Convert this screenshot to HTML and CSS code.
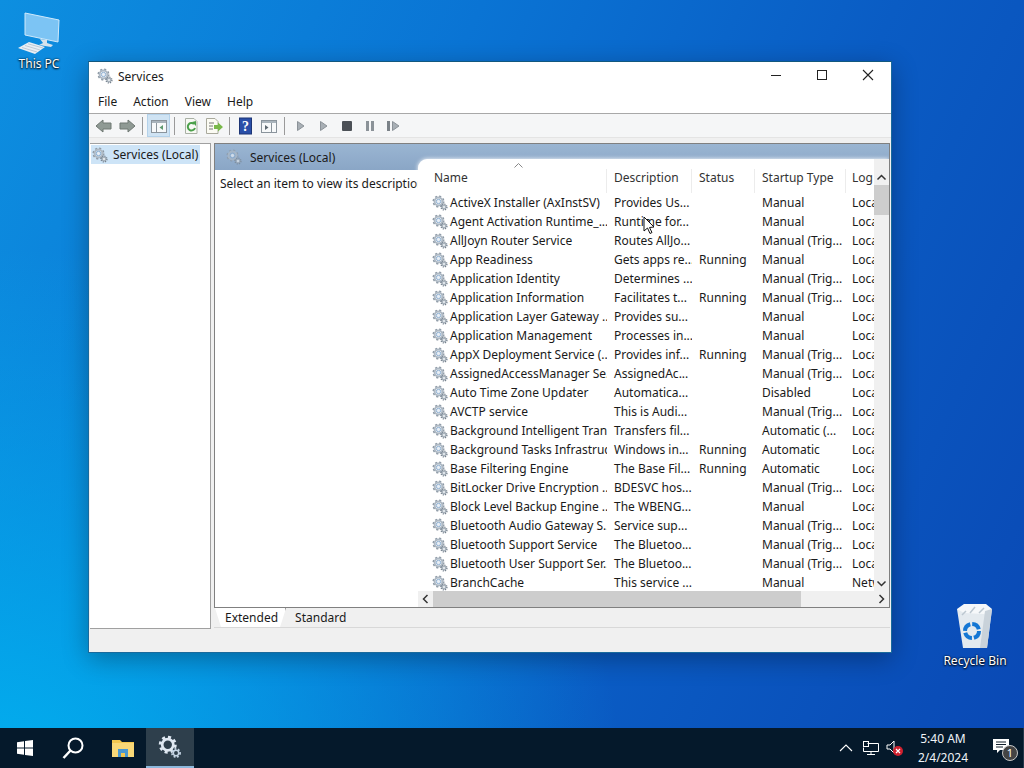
FILE: index.html
```html
<!DOCTYPE html>
<html lang="en">
<head>
  <meta charset="UTF-8" />
  <title>Services</title>
  <link rel="stylesheet" href="styles.css">
</head>
<body>

  <!-- shared icons -->
  <svg class="defs" width="0" height="0">
    <symbol id="gear" viewBox="0 0 16 16">
      <circle cx="6.5" cy="6.5" r="5" fill="none" stroke="#8b97a3" stroke-width="2" stroke-dasharray="2 1.93"/>
      <circle cx="6.5" cy="6.5" r="3.9" fill="none" stroke="#aeb9c4" stroke-width="2"/>
      <circle cx="6.5" cy="6.5" r="2.2" fill="#e8eef5" stroke="#77a0c8" stroke-width="0.8"/>
      <circle cx="12" cy="12" r="2.9" fill="none" stroke="#77838f" stroke-width="1.4" stroke-dasharray="1.2 1.08"/>
      <circle cx="12" cy="12" r="2" fill="#dfe5ea" stroke="#8d99a5" stroke-width="1"/>
    </symbol>
  </svg>

  <div class="desktop">

    <!-- Desktop icons -->
    <div class="desk-icon pc-icon">
      <svg width="48" height="44" viewBox="0 0 48 44">
        <polygon points="12,1 60,1" fill="none"/>
        <polygon points="10,2 44,9 43,31 10,24" fill="#7cc4f4" stroke="#cfe9fb" stroke-width="1"/>
        <polygon points="25,28 32,29 32,32 38,34 36,36 24,34 28,32" fill="#d5e2ec"/>
        <polygon points="3,37 14,31 30,36 20,43" fill="#e8eef4"/>
        <path d="M7 36.500L22 41M10 34.500L25 39M13 32.800L28 37" stroke="#a9bac8" stroke-width="0.7"/>
      </svg>
      <span>This PC</span>
    </div>

    <div class="desk-icon bin-icon">
      <svg width="42" height="46" viewBox="0 0 42 46">
        <polygon points="3,6 38,6 33,45 9,45" fill="#e4eaef"/>
        <polygon points="3,6 10,1 32,1 38,6 30,11 10,10" fill="#f6f8fa"/>
        <path d="M8 12L12 8M16 10L21 4M25 10L30 5" stroke="#bcc7d0" stroke-width="1.500"/>
        <polygon points="33,45 26,45 31,8 38,6" fill="#c9d2da"/>
        <circle cx="18" cy="28" r="7" fill="none" stroke="#1577d4" stroke-width="4" stroke-dasharray="9 2"/>
      </svg>
      <span>Recycle Bin</span>
    </div>

    <!-- Services window -->
    <div class="window">
      <div class="title-bar">
        <svg class="title-gear"><use href="#gear"/></svg>
        <span class="title-text">Services</span>
        <div class="win-controls">
          <div class="win-btn"><svg width="12" height="12"><path d="M1 6.500H11" stroke="#222"/></svg></div>
          <div class="win-btn"><svg width="12" height="12"><rect x="1.500" y="1.500" width="9" height="9" fill="none" stroke="#222"/></svg></div>
          <div class="win-btn"><svg width="12" height="12"><path d="M1 1L11 11M11 1L1 11" stroke="#222" stroke-width="1.100"/></svg></div>
        </div>
      </div>

      <div class="menu-bar">
        <a>File</a>
        <a>Action</a>
        <a>View</a>
        <a>Help</a>
      </div>

      <div class="toolbar">
        <div class="tool"><svg width="18" height="16"><polygon points="1,8 8,2 8,5 16,5 16,11 8,11 8,14" fill="#8f9a94" stroke="#6f7873"/></svg></div>
        <div class="tool"><svg width="18" height="16"><polygon points="17,8 10,2 10,5 2,5 2,11 10,11 10,14" fill="#8f9a94" stroke="#6f7873"/></svg></div>
        <div class="tool-sep"></div>
        <div class="tool tool-on"><svg width="18" height="16"><rect x="1.500" y="2.500" width="15" height="12" fill="#f7f9fa" stroke="#8a949c"/><rect x="2" y="3" width="14" height="2" fill="#a9b4bc"/><path d="M6.500 5V14" stroke="#8a949c"/><polygon points="13,7 13,12 9.500,9.500" fill="#5f9a70"/></svg></div>
        <div class="tool-sep"></div>
        <div class="tool"><svg width="18" height="16"><path d="M3.500 .5H12L15 3.500V15.500H3.500Z" fill="#f7f9f4" stroke="#a9b0a4"/><path d="M12 6A3.700 3.700 0 1 0 13 10" fill="none" stroke="#4ba04a" stroke-width="2"/><polygon points="10,4 14,3 14,8" fill="#4ba04a"/></svg></div>
        <div class="tool"><svg width="18" height="16"><path d="M1.500 .5H10L13 3.500V15.500H1.500Z" fill="#fbfbf3" stroke="#a9a99c"/><path d="M4 5H9M4 8H8M4 11H8" stroke="#777"/><polygon points="9,7 13,7 13,4.500 18,9 13,13.500 13,11 9,11" fill="#79b84a"/></svg></div>
        <div class="tool-sep"></div>
        <div class="tool"><svg width="18" height="18"><rect x="2.500" y="1" width="12" height="16" fill="#2a4fa8" stroke="#1d3575"/><text x="8.500" y="14" class="help-mark">?</text></svg></div>
        <div class="tool"><svg width="18" height="16"><rect x="1.500" y="2.500" width="15" height="12" fill="#f7f9fa" stroke="#8a949c"/><rect x="2" y="3" width="14" height="2" fill="#a9b4bc"/><path d="M11.500 5V14" stroke="#8a949c"/><polygon points="5,7 5,12 8.500,9.500" fill="#5d6870"/></svg></div>
        <div class="tool-sep"></div>
        <div class="tool"><svg width="18" height="16"><polygon points="5.500,3.500 5.500,12.500 12,8" fill="#a8afb5" stroke="#8b9298"/></svg></div>
        <div class="tool"><svg width="18" height="16"><polygon points="5.500,3.500 5.500,12.500 12,8" fill="#a8afb5" stroke="#8b9298"/></svg></div>
        <div class="tool"><svg width="18" height="16"><rect x="4" y="3" width="10" height="10" rx="1" fill="#4b5056"/></svg></div>
        <div class="tool"><svg width="18" height="16"><rect x="5" y="3" width="3" height="10" fill="#8b9298"/><rect x="10" y="3" width="3" height="10" fill="#8b9298"/></svg></div>
        <div class="tool"><svg width="18" height="16"><rect x="3" y="3" width="3" height="10" fill="#7b8288"/><polygon points="8.500,3.500 8.500,12.500 15,8" fill="#a8afb5" stroke="#8b9298"/></svg></div>
      </div>

      <div class="main">
        <!-- Tree -->
        <div class="tree">
          <div class="tree-item">
            <svg class="row-gear"><use href="#gear"/></svg>
            <span>Services (Local)</span>
          </div>
        </div>

        <!-- Details -->
        <div class="details">
          <div class="pane">
            <div class="pane-band">
              <svg class="band-gear"><use href="#gear"/></svg>
              <span>Services (Local)</span>
            </div>
            <div class="pane-body">
              <p class="pane-desc">Select an item to view its description.</p>
              <div class="list">
                <div class="list-main">
                  <div class="list-cols">
                    <div class="list-head">
                      <div class="th th-name">Name<svg class="sort-mark" width="9" height="5"><path d="M.5 4.500L4.500 .5L8.500 4.500" fill="none" stroke="#888"/></svg></div>
                      <div class="th">Description</div>
                      <div class="th">Status</div>
                      <div class="th">Startup Type</div>
                      <div class="th th-last">Log</div>
                    </div>
                    <div class="row"><span class="name"><svg class="row-gear"><use href="#gear"/></svg>ActiveX Installer (AxInstSV)</span><span>Provides Us...</span><span></span><span>Manual</span><span>Local</span></div>
                    <div class="row"><span class="name"><svg class="row-gear"><use href="#gear"/></svg>Agent Activation Runtime_...</span><span>Runtime for...</span><span></span><span>Manual</span><span>Local</span></div>
                    <div class="row"><span class="name"><svg class="row-gear"><use href="#gear"/></svg>AllJoyn Router Service</span><span>Routes AllJo...</span><span></span><span>Manual (Trig...</span><span>Local</span></div>
                    <div class="row"><span class="name"><svg class="row-gear"><use href="#gear"/></svg>App Readiness</span><span>Gets apps re...</span><span>Running</span><span>Manual</span><span>Local</span></div>
                    <div class="row"><span class="name"><svg class="row-gear"><use href="#gear"/></svg>Application Identity</span><span>Determines ...</span><span></span><span>Manual (Trig...</span><span>Local</span></div>
                    <div class="row"><span class="name"><svg class="row-gear"><use href="#gear"/></svg>Application Information</span><span>Facilitates t...</span><span>Running</span><span>Manual (Trig...</span><span>Local</span></div>
                    <div class="row"><span class="name"><svg class="row-gear"><use href="#gear"/></svg>Application Layer Gateway ...</span><span>Provides su...</span><span></span><span>Manual</span><span>Local</span></div>
                    <div class="row"><span class="name"><svg class="row-gear"><use href="#gear"/></svg>Application Management</span><span>Processes in...</span><span></span><span>Manual</span><span>Local</span></div>
                    <div class="row"><span class="name"><svg class="row-gear"><use href="#gear"/></svg>AppX Deployment Service (...</span><span>Provides inf...</span><span>Running</span><span>Manual (Trig...</span><span>Local</span></div>
                    <div class="row"><span class="name"><svg class="row-gear"><use href="#gear"/></svg>AssignedAccessManager Se...</span><span>AssignedAc...</span><span></span><span>Manual (Trig...</span><span>Local</span></div>
                    <div class="row"><span class="name"><svg class="row-gear"><use href="#gear"/></svg>Auto Time Zone Updater</span><span>Automatica...</span><span></span><span>Disabled</span><span>Local</span></div>
                    <div class="row"><span class="name"><svg class="row-gear"><use href="#gear"/></svg>AVCTP service</span><span>This is Audi...</span><span></span><span>Manual (Trig...</span><span>Local</span></div>
                    <div class="row"><span class="name"><svg class="row-gear"><use href="#gear"/></svg>Background Intelligent Tran...</span><span>Transfers fil...</span><span></span><span>Automatic (...</span><span>Local</span></div>
                    <div class="row"><span class="name"><svg class="row-gear"><use href="#gear"/></svg>Background Tasks Infrastruc...</span><span>Windows in...</span><span>Running</span><span>Automatic</span><span>Local</span></div>
                    <div class="row"><span class="name"><svg class="row-gear"><use href="#gear"/></svg>Base Filtering Engine</span><span>The Base Fil...</span><span>Running</span><span>Automatic</span><span>Local</span></div>
                    <div class="row"><span class="name"><svg class="row-gear"><use href="#gear"/></svg>BitLocker Drive Encryption ...</span><span>BDESVC hos...</span><span></span><span>Manual (Trig...</span><span>Local</span></div>
                    <div class="row"><span class="name"><svg class="row-gear"><use href="#gear"/></svg>Block Level Backup Engine ...</span><span>The WBENG...</span><span></span><span>Manual</span><span>Local</span></div>
                    <div class="row"><span class="name"><svg class="row-gear"><use href="#gear"/></svg>Bluetooth Audio Gateway S...</span><span>Service sup...</span><span></span><span>Manual (Trig...</span><span>Local</span></div>
                    <div class="row"><span class="name"><svg class="row-gear"><use href="#gear"/></svg>Bluetooth Support Service</span><span>The Bluetoo...</span><span></span><span>Manual (Trig...</span><span>Local</span></div>
                    <div class="row"><span class="name"><svg class="row-gear"><use href="#gear"/></svg>Bluetooth User Support Ser...</span><span>The Bluetoo...</span><span></span><span>Manual (Trig...</span><span>Local</span></div>
                    <div class="row"><span class="name"><svg class="row-gear"><use href="#gear"/></svg>BranchCache</span><span>This service ...</span><span></span><span>Manual</span><span>Netw</span></div>
                  </div>
                  <div class="vscroll">
                    <svg width="15" height="15"><path d="M3.500 9.500L7.500 5.500L11.500 9.500" fill="none" stroke="#333" stroke-width="1.500"/></svg>
                    <div class="vthumb"></div>
                    <div class="scroll-fill"></div>
                    <svg width="15" height="15"><path d="M3.500 5.500L7.500 9.500L11.500 5.500" fill="none" stroke="#333" stroke-width="1.500"/></svg>
                  </div>
                </div>
                <div class="hscroll">
                  <svg width="15" height="16"><path d="M9.500 4L5.500 8L9.500 12" fill="none" stroke="#333" stroke-width="1.500"/></svg>
                  <div class="hthumb"></div>
                  <div class="scroll-fill"></div>
                  <svg width="15" height="16"><path d="M5.500 4L9.500 8L5.500 12" fill="none" stroke="#333" stroke-width="1.500"/></svg>
                </div>
              </div>
            </div>
          </div>
          <div class="tabs">
            <span class="tab tab-on">Extended</span>
            <span class="tab">Standard</span>
          </div>
        </div>
      </div>

      <div class="status-bar"></div>
    </div>

    <!-- Mouse pointer -->
    <svg class="pointer" width="12" height="19" viewBox="0 0 12 19">
      <polygon points="1,1 1,15 4.500,12 7,17.500 9,16.500 6.500,11.500 11,11" fill="#fff" stroke="#111"/>
    </svg>

    <!-- Taskbar -->
    <div class="taskbar">
      <div class="task-btn">
        <svg width="16" height="16"><polygon points="0,2.300 7,1.300 7,7.500 0,7.500" fill="#fff"/><polygon points="8,1.100 16,0 16,7.500 8,7.500" fill="#fff"/><polygon points="0,8.500 7,8.500 7,14.700 0,13.700" fill="#fff"/><polygon points="8,8.500 16,8.500 16,16 8,14.900" fill="#fff"/></svg>
      </div>
      <div class="task-btn">
        <svg width="22" height="22"><circle cx="13.500" cy="8.500" r="7" fill="none" stroke="#fff" stroke-width="2"/><path d="M8.500 13.500L1.500 21" stroke="#fff" stroke-width="2.500"/></svg>
      </div>
      <div class="task-btn">
        <svg width="22" height="19"><path d="M0 1H8L10 3H22V18H0Z" fill="#f3c74f"/><rect y="4" width="22" height="14" fill="#f9d877"/><rect x="6" y="10" width="10" height="8" fill="#4a98d0"/><rect x="9" y="14" width="4" height="4" fill="#f3c74f"/></svg>
      </div>
      <div class="task-btn task-on">
        <svg width="24" height="24" viewBox="0 0 16 16"><circle cx="6.500" cy="6.500" r="5" fill="none" stroke="#dfe8f2" stroke-width="2" stroke-dasharray="2 1.93"/><circle cx="6.500" cy="6.500" r="3.700" fill="none" stroke="#dfe8f2" stroke-width="1.800"/><circle cx="12" cy="12" r="2.700" fill="none" stroke="#c4d4e4" stroke-width="1.200" stroke-dasharray="1.200 1.080"/><circle cx="12" cy="12" r="1.800" fill="none" stroke="#c4d4e4" stroke-width="1"/></svg>
      </div>

      <div class="tray">
        <svg width="14" height="8"><path d="M1 7L7 1L13 7" fill="none" stroke="#fff" stroke-width="1.100"/></svg>
        <svg class="tray-net" width="16" height="14"><path d="M4.500 2.500H15.500V10.500H.5V6.500" fill="none" stroke="#fff"/><rect x=".5" y=".5" width="5" height="5" fill="none" stroke="#fff"/><path d="M8 10.500V13.500M4 13.500H12" stroke="#fff"/></svg>
        <span class="tray-sound">
          <svg width="18" height="18"><path d="M1 6H4L8 2V14L4 10H1Z" fill="none" stroke="#fff"/><circle cx="12" cy="12" r="5" fill="#d0212f"/><path d="M10 10L14 14M14 10L10 14" stroke="#fff" stroke-width="1.200"/></svg>
        </span>
        <div class="clock">
          <div>5:40 AM</div>
          <div>2/4/2024</div>
        </div>
        <span class="notify">
          <svg width="16" height="15"><path d="M0 0H16V11H7L4 14V11H0Z" fill="#fff"/><path d="M3 3H13M3 5.500H13M3 8H10" stroke="#12202c" stroke-width="1"/></svg>
          <span class="notify-badge">1</span>
        </span>
      </div>
    </div>
  </div>

</body>
</html>
```

FILE: styles.css
```css
* {
  box-sizing: border-box;
  margin: 0;
  padding: 0;
}

html, body {
  width: 1024px;
  height: 768px;
  overflow: hidden;
  font-family: "Noto Sans", "Open Sans", sans-serif;
  font-size: 12px;
  color: #1a1a1a;
}

.defs {
  position: absolute;
}

.desktop {
  position: relative;
  width: 1024px;
  height: 768px;
  display: flex;
  flex-direction: column;
  justify-content: flex-end;
  background:
    radial-gradient(ellipse 620px 520px at 0% 100%, #02aeee 0%, rgba(2, 170, 235, 0) 100%),
    linear-gradient(115deg, #0d8fe0 0%, #0a74d4 35%, #0a5cc4 65%, #0a48b4 100%);
}

/* Desktop icons */
.desk-icon {
  position: absolute;
  width: 76px;
  display: flex;
  flex-direction: column;
  align-items: center;
  color: #fff;
  text-shadow: 0 1px 2px #000, 0 0 2px #000;
}

.pc-icon {
  left: 1px;
  top: 11px;
}

.bin-icon {
  left: 937px;
  top: 603px;
}

.bin-icon span {
  margin-top: 3px;
}

/* Window */
.window {
  position: absolute;
  left: 88px;
  top: 61px;
  width: 804px;
  height: 592px;
  display: flex;
  flex-direction: column;
  background: #f0f0f0;
  border: 1px solid #1a6a9c;
  border-top-color: #12587f;
  box-shadow: 0 6px 24px rgba(0, 0, 0, 0.3);
}

.title-bar {
  display: flex;
  align-items: center;
  height: 28px;
  background: #fff;
  padding-left: 8px;
}

.title-gear {
  width: 16px;
  height: 16px;
  margin-right: 5px;
}

.title-text {
  flex: 1;
  font-size: 12px;
}

.win-controls {
  display: flex;
  margin-top: -2px;
}

.win-btn {
  width: 46px;
  height: 28px;
  display: flex;
  align-items: center;
  justify-content: center;
}

.menu-bar {
  display: flex;
  height: 23px;
  align-items: center;
  gap: 16px;
  padding-left: 9px;
  background: #fff;
}

.toolbar {
  display: flex;
  align-items: center;
  height: 25px;
  padding-left: 3px;
  background: #f5f6f7;
  border-top: 1px solid #a8a8a8;
  border-bottom: 1px solid #e4e4e4;
}

.tool {
  width: 23px;
  height: 23px;
  display: flex;
  align-items: center;
  justify-content: center;
}

.tool-on {
  background: #cfe3f3;
  border: 1px solid #b4d2ea;
}

.tool-sep {
  width: 1px;
  height: 18px;
  margin: 0 4px;
  background: #9a9a9a;
}

.help-mark {
  font-family: "Liberation Serif", serif;
  font-size: 14px;
  font-weight: bold;
  fill: #fff;
  text-anchor: middle;
}

.main {
  flex: 1;
  display: flex;
  gap: 3px;
  padding: 5px 1px 0 1px;
  background: #f0f0f0;
  min-height: 0;
}

.tree {
  width: 121px;
  background: #fff;
  border: 1px solid #a0a0a0;
  border-left: none;
  padding: 1px 0 0 1px;
}

.tree-item {
  display: flex;
  align-items: center;
  gap: 5px;
  height: 19px;
  padding-left: 1px;
  background: #cde4f7;
  margin-right: 10px;
}

.row-gear {
  width: 16px;
  height: 16px;
  flex: none;
}

.details {
  flex: 1;
  display: flex;
  flex-direction: column;
  min-width: 0;
}

.pane {
  height: 465px;
  display: flex;
  flex-direction: column;
  background: #fff;
  border: 1px solid #808080;
  border-width: 1px 1px 1px 1px;
  overflow: hidden;
}

.pane-band {
  display: flex;
  align-items: center;
  flex: none;
  height: 26px;
  padding-left: 11px;
  gap: 8px;
  background: linear-gradient(#9ab5d2, #8aa6c6);
}

.band-gear {
  width: 16px;
  height: 16px;
  opacity: 0.7;
}

.pane-body {
  flex: 1;
  display: flex;
  min-height: 0;
}

.pane-desc {
  width: 203px;
  flex: none;
  padding: 5px 0 0 5px;
  white-space: nowrap;
}

.list {
  flex: 1;
  display: flex;
  flex-direction: column;
  min-width: 0;
  margin-top: -11px;
  background: #fff;
  border-top-left-radius: 9px;
  box-shadow: 0 0 4px #fff;
}

.list-main {
  flex: 1;
  display: flex;
  min-height: 0;
}

.list-cols {
  flex: 1;
  min-width: 0;
  overflow: hidden;
  padding-left: 11px;
}

.list-head,
.row {
  display: grid;
  grid-template-columns: 178px 85px 63px 91px 40px;
  width: 457px;
}

.list-head {
  height: 34px;
  align-items: end;
  color: #333;
}

.th {
  position: relative;
  height: 24px;
  padding-left: 7px;
  border-right: 1px solid #ececec;
}

.th-name {
  padding-left: 5px;
}

.th-last {
  border-right: none;
  padding-left: 6px;
}

.sort-mark {
  position: absolute;
  left: 85px;
  top: -6px;
}

.row {
  height: 19px;
  align-items: center;
  white-space: nowrap;
}

.row span {
  padding-left: 7px;
  overflow: hidden;
}

.row span:last-child {
  padding-left: 6px;
}

.row .name {
  display: flex;
  align-items: center;
  gap: 2px;
  padding-left: 3px;
}

.vscroll {
  width: 15px;
  display: flex;
  flex-direction: column;
  background: #f0f0f0;
  flex: none;
  padding-top: 11px;
}

.vthumb {
  height: 30px;
  background: #cdcdcd;
}

.scroll-fill {
  flex: 1;
}

.hscroll {
  display: flex;
  align-items: center;
  height: 16px;
  flex: none;
  background: #f0f0f0;
}

.hthumb {
  width: 368px;
  height: 16px;
  background: #cdcdcd;
}

/* Tabs */
.tabs {
  display: flex;
  height: 20px;
  padding-left: 1px;
  border-bottom: 1px solid #d8d8d8;
}

.tab {
  display: flex;
  align-items: center;
  padding: 0 8px 0 10px;
  margin-right: -1px;
  clip-path: polygon(0 0, 100% 0, calc(100% - 6px) 100%, 6px 100%);
  background: linear-gradient(to right, #808080 0 1px, transparent 1px);
}

.tab-on {
  background: #fff;
}

.status-bar {
  height: 23px;
  background: #f0f0f0;
}

.pointer {
  position: absolute;
  left: 643px;
  top: 216px;
}

/* Taskbar */
.taskbar {
  display: flex;
  align-items: center;
  height: 40px;
  background: #05192b;
  color: #fff;
}

.task-btn {
  width: 48px;
  height: 40px;
  flex: none;
  display: flex;
  align-items: center;
  justify-content: center;
}

.task-btn:first-child {
  width: 49px;
}

.task-btn:nth-child(3) {
  margin-left: 2px;
}

.task-on {
  background: #2e3f4c;
  border-bottom: 2px solid #8db8dc;
  margin-left: -1px;
}

.tray {
  margin-left: auto;
  display: flex;
  align-items: center;
  height: 40px;
}

.tray-net {
  margin-left: 10px;
}

.tray-sound {
  display: flex;
  margin-left: 7px;
}

.clock {
  width: 70px;
  margin-left: 4px;
  text-align: center;
  line-height: 19px;
  color: #f0f4f8;
}

.notify {
  position: relative;
  width: 46px;
  height: 40px;
  display: flex;
  align-items: center;
  justify-content: center;
  border-right: 1px solid #24384a;
  padding-bottom: 4px;
}

.notify-badge {
  position: absolute;
  left: 24px;
  top: 17px;
  width: 16px;
  height: 16px;
  border-radius: 50%;
  border: 1px solid #c8c8c8;
  background: #444;
  font-size: 11px;
  line-height: 14px;
  text-align: center;
}
```
